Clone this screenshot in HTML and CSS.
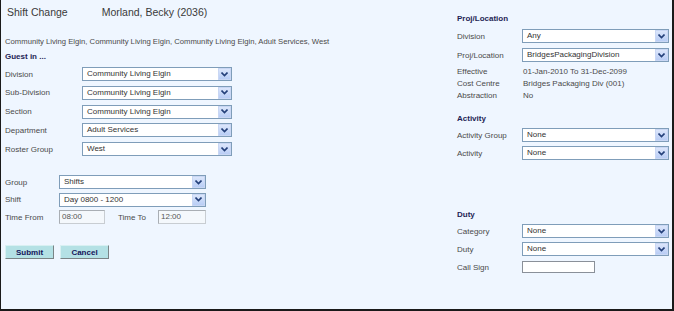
FILE: index.html
```html
<!DOCTYPE html>
<html lang="en">
<head>
    <meta charset="UTF-8">
    <title>Shift Change</title>
    <link rel="stylesheet" href="styles.css">
</head>
<body>
    <div class="frame">
        <div class="left">
            <div class="title">
                <span class="screen">Shift Change</span>
                <span class="who">Morland, Becky (2036)</span>
            </div>
            <div class="path">Community Living Elgin, Community Living Elgin, Community Living Elgin, Adult Services, West</div>
            <div class="heading">Guest in ...</div>

            <div class="form guest">
                <label>Division</label>
                <div class="select"><span>Community Living Elgin</span><i class="arrow"><svg width="7" height="5" viewBox="0 0 7 5"><path d="M0.5 0.5 L3.5 3.5 L6.5 0.5" fill="none" stroke="#24407a" stroke-width="1.6"/></svg></i></div>
                <label>Sub-Division</label>
                <div class="select"><span>Community Living Elgin</span><i class="arrow"><svg width="7" height="5" viewBox="0 0 7 5"><path d="M0.5 0.5 L3.5 3.5 L6.5 0.5" fill="none" stroke="#24407a" stroke-width="1.6"/></svg></i></div>
                <label>Section</label>
                <div class="select"><span>Community Living Elgin</span><i class="arrow"><svg width="7" height="5" viewBox="0 0 7 5"><path d="M0.5 0.5 L3.5 3.5 L6.5 0.5" fill="none" stroke="#24407a" stroke-width="1.6"/></svg></i></div>
                <label>Department</label>
                <div class="select"><span>Adult Services</span><i class="arrow"><svg width="7" height="5" viewBox="0 0 7 5"><path d="M0.5 0.5 L3.5 3.5 L6.5 0.5" fill="none" stroke="#24407a" stroke-width="1.6"/></svg></i></div>
                <label>Roster Group</label>
                <div class="select"><span>West</span><i class="arrow"><svg width="7" height="5" viewBox="0 0 7 5"><path d="M0.5 0.5 L3.5 3.5 L6.5 0.5" fill="none" stroke="#24407a" stroke-width="1.6"/></svg></i></div>
            </div>

            <div class="form shift">
                <label>Group</label>
                <div class="select"><span>Shifts</span><i class="arrow"><svg width="7" height="5" viewBox="0 0 7 5"><path d="M0.5 0.5 L3.5 3.5 L6.5 0.5" fill="none" stroke="#24407a" stroke-width="1.6"/></svg></i></div>
                <label>Shift</label>
                <div class="select"><span>Day 0800 - 1200</span><i class="arrow"><svg width="7" height="5" viewBox="0 0 7 5"><path d="M0.5 0.5 L3.5 3.5 L6.5 0.5" fill="none" stroke="#24407a" stroke-width="1.6"/></svg></i></div>
                <label>Time From</label>
                <div class="times">
                    <div class="text from">08:00</div>
                    <label class="to-label">Time To</label>
                    <div class="text to">12:00</div>
                </div>
            </div>

            <div class="buttons">
                <button class="btn">Submit</button>
                <button class="btn">Cancel</button>
            </div>
        </div>

        <div class="right">
            <div class="heading first">Proj/Location</div>
            <div class="form side">
                <label>Division</label>
                <div class="select"><span>Any</span><i class="arrow"><svg width="7" height="5" viewBox="0 0 7 5"><path d="M0.5 0.5 L3.5 3.5 L6.5 0.5" fill="none" stroke="#24407a" stroke-width="1.6"/></svg></i></div>
                <label>Proj/Location</label>
                <div class="select"><span>BridgesPackagingDivision</span><i class="arrow"><svg width="7" height="5" viewBox="0 0 7 5"><path d="M0.5 0.5 L3.5 3.5 L6.5 0.5" fill="none" stroke="#24407a" stroke-width="1.6"/></svg></i></div>
            </div>
            <div class="info">
                <label>Effective</label><span>01-Jan-2010 To 31-Dec-2099</span>
                <label>Cost Centre</label><span>Bridges Packaging Div (001)</span>
                <label>Abstraction</label><span>No</span>
            </div>

            <div class="heading activity">Activity</div>
            <div class="form side tight">
                <label>Activity Group</label>
                <div class="select"><span>None</span><i class="arrow"><svg width="7" height="5" viewBox="0 0 7 5"><path d="M0.5 0.5 L3.5 3.5 L6.5 0.5" fill="none" stroke="#24407a" stroke-width="1.6"/></svg></i></div>
                <label>Activity</label>
                <div class="select"><span>None</span><i class="arrow"><svg width="7" height="5" viewBox="0 0 7 5"><path d="M0.5 0.5 L3.5 3.5 L6.5 0.5" fill="none" stroke="#24407a" stroke-width="1.6"/></svg></i></div>
            </div>

            <div class="heading duty">Duty</div>
            <div class="form side tight duty-form">
                <label>Category</label>
                <div class="select"><span>None</span><i class="arrow"><svg width="7" height="5" viewBox="0 0 7 5"><path d="M0.5 0.5 L3.5 3.5 L6.5 0.5" fill="none" stroke="#24407a" stroke-width="1.6"/></svg></i></div>
                <label>Duty</label>
                <div class="select"><span>None</span><i class="arrow"><svg width="7" height="5" viewBox="0 0 7 5"><path d="M0.5 0.5 L3.5 3.5 L6.5 0.5" fill="none" stroke="#24407a" stroke-width="1.6"/></svg></i></div>
                <label>Call Sign</label>
                <div class="text callsign"></div>
            </div>
        </div>
    </div>
</body>
</html>
```

FILE: styles.css
```css
body {
    margin: 0;
    padding: 0;
    font-family: "Liberation Sans", Arial, sans-serif;
    font-size: 8px;
    color: #4a4a4a;
    background-color: #f0f7ff;
}
.frame {
    box-sizing: border-box;
    width: 674px;
    height: 311px;
    display: flex;
    background-color: #eff6ff;
    border-left: 1px solid #1a1a1a;
    border-right: 2px solid #1a1a1a;
    border-bottom: 2px solid #1a1a1a;
}
.left {
    width: 450px;
    padding-left: 4px;
}
.right {
    flex: 1;
    padding-left: 2px;
}
.title {
    padding-top: 5px;
    height: 14px;
    line-height: 14px;
    font-size: 10.5px;
    color: #3a3a3a;
}
.title .screen {
    padding-left: 2px;
}
.title .who {
    margin-left: 31px;
}
.path {
    margin-top: 18px;
    line-height: 10px;
    font-size: 7.7px;
    color: #4a4a4a;
}
.heading {
    margin-top: 5px;
    line-height: 10px;
    font-weight: bold;
    color: #1f1f55;
}
.heading.first {
    margin-top: 14px;
}
.heading.activity {
    margin-top: 13px;
}
.heading.duty {
    margin-top: 50px;
}
.form {
    display: grid;
    align-items: center;
}
.guest {
    margin-top: 5px;
    grid-template-columns: 77px 150px;
    grid-auto-rows: 14px;
    row-gap: 4.75px;
}
.shift {
    margin-top: 19px;
    grid-template-columns: 54px 147px;
    grid-auto-rows: 14px;
    row-gap: 3.5px;
}
.side {
    margin-top: 5px;
    grid-template-columns: 65px 147px;
    grid-auto-rows: 14px;
    row-gap: 5px;
}
.side.tight {
    margin-top: 4px;
    row-gap: 4px;
}
.duty-form {
    row-gap: 3.5px;
}
label {
    white-space: nowrap;
    color: #4a4a4a;
}
.select {
    box-sizing: border-box;
    height: 14px;
    display: flex;
    align-items: center;
    justify-content: space-between;
    background-color: #fff;
    border: 1px solid #7f9db9;
    color: #333;
}
.select span {
    padding-left: 4px;
    line-height: 12px;
}
.arrow {
    box-sizing: border-box;
    width: 13px;
    height: 12px;
    display: flex;
    align-items: center;
    justify-content: center;
    background: linear-gradient(#dce6fb, #b9cdf5);
    border: 1px solid #c9d7f4;
}
.times {
    display: flex;
    align-items: center;
}
.text {
    box-sizing: border-box;
    height: 14px;
    line-height: 12px;
    padding-left: 2px;
    background-color: #f4f8fc;
    border: 1px solid #c8cdd2;
    border-top-color: #a9aeb4;
    border-left-color: #a9aeb4;
    color: #555;
}
.from {
    width: 46px;
}
.to-label {
    margin-left: 13px;
    width: 40px;
}
.to {
    width: 48px;
}
.callsign {
    width: 73px;
    height: 12px;
    background-color: #fff;
    border-color: #8a9099;
}
.buttons {
    margin-top: 21px;
    display: flex;
    gap: 6px;
}
.btn {
    box-sizing: border-box;
    width: 49px;
    height: 14px;
    padding: 0;
    font-family: "Liberation Sans", Arial, sans-serif;
    font-size: 8px;
    font-weight: bold;
    color: #14145a;
    background-color: #b4e1e5;
    border: 1px solid;
    border-color: #d8f0f2 #7a8486 #7a8486 #d8f0f2;
}
.info {
    margin-top: 3px;
    display: grid;
    grid-template-columns: 66px auto;
    grid-auto-rows: 12px;
    align-items: center;
}
.info span {
    color: #4a4a4a;
}
```
